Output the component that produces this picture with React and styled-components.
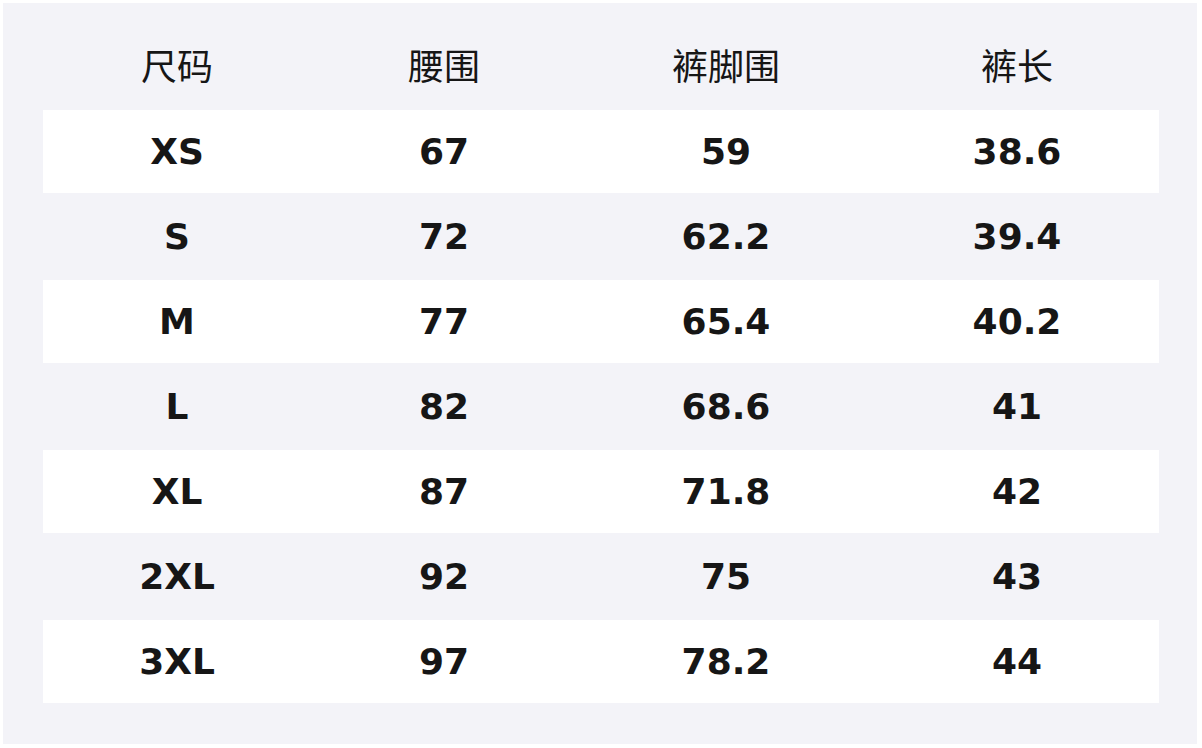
import React from "react";
import styled, { createGlobalStyle } from "styled-components";

const GlobalStyle = createGlobalStyle`
  html, body {
    margin: 0;
    padding: 0;
    background: #ffffff;
  }
`;

const Panel = styled.div`
  margin: 3px;
  width: 1194px;
  height: 741px;
  box-sizing: border-box;
  padding: 21px 38px 40px 40px;
  background: #f3f3f8;
  font-family: "DejaVu Sans", "Noto Sans CJK SC", sans-serif;
  color: #161616;
`;

const Row = styled.div`
  display: grid;
  grid-template-columns: 268px 266px 298px 284px;
  height: 85px;
  align-items: center;
  border-top: 1px solid transparent;
  border-bottom: 1px solid transparent;
  box-sizing: border-box;
  background-clip: padding-box;
  padding-bottom: ${(props) => (props.head ? "6px" : "0")};
  background-color: ${(props) => (props.striped ? "#ffffff" : "transparent")};
`;

const HeadCell = styled.div`
  text-align: center;
  font-size: 36px;
  font-weight: 400;
  font-family: "Noto Sans CJK SC", sans-serif;
  line-height: 1;
`;

const Cell = styled.div`
  text-align: center;
  font-size: 36px;
  font-weight: 700;
  line-height: 1;
`;

const headers = ["尺码", "腰围", "裤脚围", "裤长"];

const rows = [
  ["XS", "67", "59", "38.6"],
  ["S", "72", "62.2", "39.4"],
  ["M", "77", "65.4", "40.2"],
  ["L", "82", "68.6", "41"],
  ["XL", "87", "71.8", "42"],
  ["2XL", "92", "75", "43"],
  ["3XL", "97", "78.2", "44"],
];

const App = () => {
  return (
    <>
      <GlobalStyle />
      <Panel>
        <Row head>
          {headers.map((h) => (
            <HeadCell key={h}>{h}</HeadCell>
          ))}
        </Row>
        {rows.map((r, i) => (
          <Row key={r[0]} striped={i % 2 === 0}>
            {r.map((v, j) => (
              <Cell key={j}>{v}</Cell>
            ))}
          </Row>
        ))}
      </Panel>
    </>
  );
};

export default App;
